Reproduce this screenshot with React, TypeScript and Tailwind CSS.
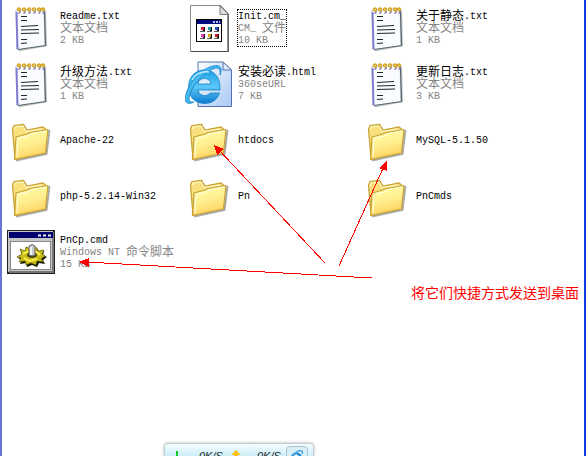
import React from "react";

type Kind = "text" | "template" | "html" | "folder" | "script";

interface Entry {
  name: string;
  kind: Kind;
  type?: string;
  size?: string;
  focused?: boolean;
}

const entries: Entry[] = [
  { name: "Readme.txt", kind: "text", type: "文本文档", size: "2 KB" },
  { name: "Init.cm_", kind: "template", type: "CM_ 文件", size: "10 KB", focused: true },
  { name: "关于静态.txt", kind: "text", type: "文本文档", size: "1 KB" },
  { name: "升级方法.txt", kind: "text", type: "文本文档", size: "1 KB" },
  { name: "安装必读.html", kind: "html", type: "360seURL", size: "7 KB" },
  { name: "更新日志.txt", kind: "text", type: "文本文档", size: "3 KB" },
  { name: "Apache-22", kind: "folder" },
  { name: "htdocs", kind: "folder" },
  { name: "MySQL-5.1.50", kind: "folder" },
  { name: "php-5.2.14-Win32", kind: "folder" },
  { name: "Pn", kind: "folder" },
  { name: "PnCmds", kind: "folder" },
  { name: "PnCp.cmd", kind: "script", type: "Windows NT 命令脚本", size: "15 KB" },
];

function TextIcon() {
  return (
    <>
      <path d="M12 8 L39 6 L40 42 L12 47.5 Z" fill="#8a8a8a" opacity=".5" />
      <path d="M9 6 L37 5 L38 42 L10 46 Z" fill="#fafcff" stroke="#c3ccd3" />
      <path d="M9.5 8 L10.5 45" stroke="#7f7cd0" strokeWidth="2" />
      <path d="M37.5 8 L38.5 41.5 L11 45.5" stroke="#59656c" strokeWidth="1.2" fill="none" />
      <path d="M14 12.5 h6 M14 16.5 h6 M14 22.5 l17 -1 M14 26 l18 -.5 M14 29.5 l18 -.5 M14 35.5 h6 M14 39.5 l6 -.5" stroke="#20272a" strokeWidth="1.2" fill="none" />
      {[12, 17, 22, 27, 32, 36].map((x) => (
        <g key={x}>
          <path d={`M${x + 1} 6 v2.500 l-1.500 1`} stroke="#6d69b5" strokeWidth="1.2" fill="none" />
          <circle cx={x} cy="5.5" r="1.500" fill="#f0dc95" stroke="#d3a21a" strokeWidth="1.300" />
        </g>
      ))}
    </>
  );
}

function TemplateIcon() {
  return (
    <>
      <path d="M5.5 1.5 H35 L43.5 10 V47.5 H5.5 Z" fill="#fff" stroke="#8b8b8b" />
      <path d="M35 1.5 L43 10.5 V47.500 H6" fill="none" stroke="#4b4b4b" strokeWidth="1.2" />
      <path d="M35 1.5 V10.5 H43.5 Z" fill="#dedede" stroke="#777" />
      <rect x="11.5" y="15.5" width="25" height="22" fill="#fff" stroke="#000" />
      <rect x="12" y="16" width="24" height="4" fill="#000b80" />
      <path d="M28 18 h2 M31 18 h2 M34 18 h1" stroke="#fff" strokeWidth="1.5" />
      {["#d12036", "#1b9b9b", "#1f4bc8", "#e036c4", "#d7a51c", "#c21d2b"].map((c, i) => {
        const x = 16 + (i % 3) * 7;
        const y = 23 + Math.floor(i / 3) * 7;
        return (
          <g key={c}>
            <path d={`M${x + 1} ${y} h3 v4 h-2`} fill="#111" />
            <rect x={x} y={y} width="3" height="3" fill={c} />
            <path d={`M${x - 1} ${y + 4.5} h5`} stroke="#111" strokeWidth=".7" />
          </g>
        );
      })}
    </>
  );
}

function HtmlIcon() {
  return (
    <>
      <defs>
        <linearGradient id="sheet" x1="0" y1="0" x2="1" y2="1">
          <stop offset="0" stopColor="#fbfdff" />
          <stop offset="1" stopColor="#a9c8f3" />
        </linearGradient>
        <linearGradient id="globe" x1="0" y1="0" x2="0" y2="1">
          <stop offset="0" stopColor="#1c9fe4" />
          <stop offset=".5" stopColor="#5cc8fa" />
          <stop offset="1" stopColor="#0b7bcd" />
        </linearGradient>
      </defs>
      <path d="M13 2 H38 L46.5 10 V46.5 H13 Z" fill="url(#sheet)" stroke="#5770ad" />
      <path d="M38 2 V10 H46.5 Z" fill="#dfeafb" stroke="#5770ad" />
      <path
        fillRule="evenodd"
        d="M35 27 C35 16 28 10 19.5 10 C10 10 3.5 17 3.5 27 C3.5 37 10 43.5 20 43.5 C27 43.5 32.5 39.500 34.500 33 H25 C23.5 35 22 35.500 19.5 35.500 C16 35.500 13.5 33 13 30 H35 Z M13 24 C13.5 20.500 16 18.500 19.5 18.500 C23 18.500 25.5 20.500 26 24 Z"
        fill="url(#globe)"
        stroke="#087bc2"
        strokeWidth=".7"
      />
      <path d="M35 15 C38 8 35 4 28 6 C18 8 5 20 1 34 C-1 41 1 46 9 42 C4 43 3 39 5 34 C9 23 20 12 29 8.5 C34 7 36 9 35 15 Z" fill="#48b9ef" stroke="#0d83cc" strokeWidth=".8" />
      <path d="M7 20 C11 13 17 11 24 12" stroke="#b9ecff" strokeWidth="1.5" fill="none" />
    </>
  );
}

function FolderIcon() {
  return (
    <>
      <defs>
        <linearGradient id="folder" x1="0" y1="0" x2=".3" y2="1">
          <stop offset="0" stopColor="#ffffa8" />
          <stop offset=".55" stopColor="#fff091" />
          <stop offset="1" stopColor="#ffd362" />
        </linearGradient>
      </defs>
      <path d="M9 44.500 L39.500 38 L42.500 14" fill="none" stroke="#555" strokeWidth="2" opacity=".5" />
      <path d="M5.5 13 L7 9.5 L16.5 8.5 L20 14 L36 11 L38.5 13 V36 L8 43.5 Z" fill="#fae07c" stroke="#c6a032" strokeWidth="1.2" />
      <path d="M7.500 43.5 L9 21 L20 18 L23 16.5 L41 13.500 L38.5 37 Z" fill="url(#folder)" stroke="#c6a032" strokeWidth="1.2" strokeLinejoin="round" />
      <path d="M10 41 L11 22.5 L21 20 L24 18 L39 15" fill="none" stroke="#ffffe6" />
      <path d="M7 14 L8 11 L16 10 L19 15.5 L35 13" fill="none" stroke="#fffbd0" />
    </>
  );
}

function ScriptIcon() {
  return (
    <>
      <rect x="0" y="2" width="48" height="44" fill="#202020" />
      <path d="M1 3 H46 V44 H1 Z" fill="#c6c6c6" />
      <path d="M2 43 H45 V4 H47 V45 H2 Z" fill="#777" />
      <rect x="2" y="4" width="44" height="6" fill="#00006f" />
      <path d="M31 7.500 h3 M36 7.500 h3 M41 7.500 h3" stroke="#ececec" strokeWidth="2" />
      <rect x="3.5" y="13.5" width="40" height="28" fill="#fff" stroke="#888" />
      <g transform="translate(0 -2)">
        <path d="M13 25 L17 26 L19 22 L24 24 L29 21 L31 25 L36 24 L35 28 L39 30 L35 33 L37 37 L31 36 L29 40 L24 38 L19 40 L18 36 L12 37 L14 33 L10 31 L15 29 Z" transform="translate(1 1)" fill="#141400" />
        <path d="M13 23 L18 25 L19 21 L24 23 L29 21 L31 25 L37 24 L35 28 L38 30 L34 33 L37 36 L30 35 L29 39 L24 37 L19 39 L18 35 L12 36 L14 32 L10 31 L15 28 Z" fill="#c7bd16" stroke="#5a5600" strokeWidth=".7" />
        <path d="M16 28 L21 25 M28 25 L33 29 M17 32 L22 35 L30 33" fill="none" stroke="#fff04d" strokeWidth="2" />
        <ellipse cx="25" cy="29" rx="5" ry="3" fill="#46430d" />
        <path d="M22 29 V20 Q25 17 28 20 V29 Q25 31 22 29 Z" fill="#c8c8c8" stroke="#666" />
        <path d="M24 21 V29" stroke="#fff" strokeWidth="1.5" />
      </g>
    </>
  );
}

const icons: Record<Kind, () => React.ReactElement> = {
  text: TextIcon,
  template: TemplateIcon,
  html: HtmlIcon,
  folder: FolderIcon,
  script: ScriptIcon,
};

/** Latin glyphs take half the advance of the Chinese ones, as in a bitmap UI font. */
function Label({ text, className }: { text: string; className: string }) {
  const runs = text.match(/[\u0000-\u00ff]+|[^\u0000-\u00ff]+/g) ?? [];
  return (
    <span className={`flex h-3 items-center whitespace-pre pt-0.5 leading-3 ${className}`}>
      {runs.map((run, i) => (
        <span key={i} className={run.charCodeAt(0) < 256 ? "text-[10px] leading-3" : "text-xs leading-3"}>
          {run}
        </span>
      ))}
    </span>
  );
}

function FileTile({ entry }: { entry: Entry }) {
  const Drawing = icons[entry.kind];
  return (
    <li className="flex h-14 items-center gap-1">
      <svg viewBox="0 0 48 48" className="size-12 shrink-0" aria-hidden="true">
        <Drawing />
      </svg>
      <div className={`border border-dotted ${entry.focused ? "border-black" : "border-transparent"}`}>
        <Label text={entry.name} className="text-black" />
        {entry.type && <Label text={entry.type} className="text-[#858585]" />}
        {entry.size && <Label text={entry.size} className="text-[#858585]" />}
      </div>
    </li>
  );
}

function SpeedBar() {
  return (
    <div className="absolute bottom-0 left-[162px] flex h-[13px] w-[150px] items-start overflow-hidden rounded-t border border-b-0 border-[#c5ced2] bg-gradient-to-b from-[#f4fdff] to-[#cdeef8] pl-2 font-['Liberation_Sans',sans-serif] text-[11px] italic leading-3 text-[#222] shadow-[0_0_3px_#aaa]">
      <svg viewBox="0 0 10 12" className="mt-1.5 h-3 w-2.5 shrink-0" aria-hidden="true">
        <path d="M4 1 V12" stroke="#16c92b" strokeWidth="2" />
      </svg>
      <span className="ml-4 mt-1.5 w-8">0K/S</span>
      <svg viewBox="0 0 10 12" className="mt-1.5 h-3 w-2.5 shrink-0" aria-hidden="true">
        <path d="M5 0 L10 5 H7 V12 H3 V5 H0 Z" fill="#ffc21c" />
      </svg>
      <span className="ml-4 mt-1.5 w-7">0K/S</span>
      <button aria-label="IE" className="ml-px mt-0.5 h-5 w-[22px] shrink-0 rounded-sm border border-[#a9c4d0] bg-[#d8eff7]">
        <svg viewBox="0 0 48 48" className="mx-auto mt-0.5 size-4" aria-hidden="true">
          <path d="M38 28 H14 C15 36 26 37 29 32 H38 C33 45 6 46 6 26 C6 5 40 5 38 28 Z M14 22 H29 C28 14 15 14 14 22 Z" fill="#2085cf" fillRule="evenodd" />
          <path d="M39 16 C46 -1 25 3 12 19 C-1 35 1 47 12 42" fill="none" stroke="#37a0df" strokeWidth="4" />
        </svg>
      </button>
    </div>
  );
}

export default function App() {
  return (
    <main className="relative min-h-screen overflow-hidden border-x-2 border-l-[#6375d6] border-r-[#0a3ddc] bg-white font-['Liberation_Mono','Noto_Sans_CJK_SC',monospace]">
      <ul className="grid grid-cols-[repeat(auto-fill,178px)] pl-[5px]">
        {entries.map((entry) => (
          <FileTile key={entry.name} entry={entry} />
        ))}
      </ul>
      <p className="absolute left-[409px] top-[284px] whitespace-nowrap text-sm leading-5 text-[#ff0000]">
        将它们快捷方式发送到桌面
      </p>
      <svg viewBox="0 0 584 456" className="pointer-events-none absolute left-0 top-0 h-[456px] w-[584px]" shapeRendering="crispEdges" aria-hidden="true">
        <g transform="translate(-2 0)" stroke="#ff0000" fill="#ff0000">
          <path d="M218 149 L325 263 M384 166 L339 266 M86 262 L372 278" fill="none" />
          <path d="M214 145 L224 149 L217 155 Z M387 160 V171 L379 168 Z M79 262 L89 258 V267 Z" stroke="none" />
        </g>
      </svg>
      <SpeedBar />
    </main>
  );
}
